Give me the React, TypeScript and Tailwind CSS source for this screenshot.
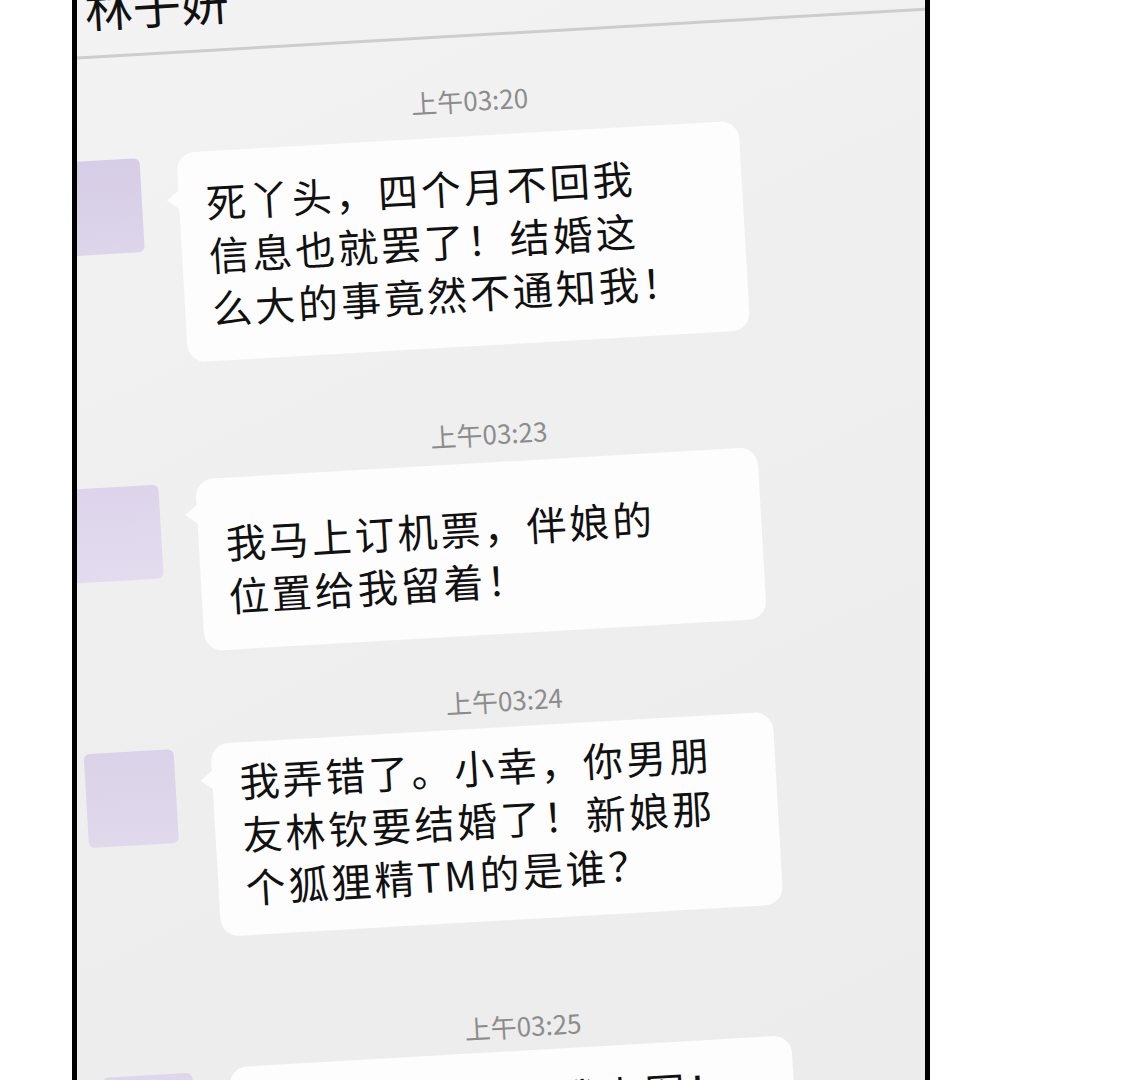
import React from "react";

type MsgProps = {
  lines: string[];
  rowClass: string;
  padClass: string;
  tailClass: string;
  avatarClass: string;
};

function Stamp({ text, cls }: { text: string; cls: string }) {
  return (
    <div className={`pr-[12px] text-center text-[26px] leading-[30px] text-[#8c8c8c] ${cls}`}>{text}</div>
  );
}

function Msg({ lines, rowClass, padClass, tailClass, avatarClass }: MsgProps) {
  return (
    <div className={`flex items-start pl-[55px] ${rowClass}`}>
      <div className={`mt-[3px] h-[94px] w-[90px] shrink-0 rounded-[6px] ${avatarClass}`} />
      <div className={`relative ml-[37px] w-[563px] shrink-0 rounded-[18px] bg-[#fdfdfd] pl-[27px] ${padClass}`}>
        <div
          className={`absolute left-[-12px] h-0 w-0 border-y-[10px] border-r-[13px] border-y-transparent border-r-[#fdfdfd] ${tailClass}`}
        />
        {lines.map((l, i) => (
          <div key={i} className="whitespace-nowrap text-[40px] leading-[53px] tracking-[3px] text-[#111111]">
            {l}
          </div>
        ))}
      </div>
    </div>
  );
}

export default function App() {
  return (
    <div className="flex h-[1080px] w-[1125px] overflow-hidden bg-white font-['Noto_Sans_CJK_SC','Noto_Sans',sans-serif]">
      <div className="w-[72px] shrink-0 bg-white" />
      <div className="relative h-full w-[858px] shrink-0 overflow-hidden border-x-[5px] border-black bg-[linear-gradient(155deg,#f3f3f3_0%,#efefef_40%,#ececec_100%)]">
        <div className="-mx-[60px] flex h-[1160px] origin-[483px_540px] rotate-[-3.3deg] flex-col">
          <div className="flex h-[36px] shrink-0 items-end border-b-[3px] border-[#cdcdcd] pl-[99px]">
            <div className="mb-[25px] text-[48px] leading-[48px] text-[#111111]">林子妍</div>
          </div>
          <Stamp text="上午03:20" cls="mt-[48px]" />
          <Msg
            rowClass="mt-[21px]"
            padClass="pt-[24px] pb-[27px]"
            tailClass="top-[37px]"
            avatarClass="bg-[linear-gradient(180deg,#d6cde6,#ddd5ea)]"
            lines={["死丫头，四个月不回我", "信息也就罢了！结婚这", "么大的事竟然不通知我！"]}
          />
          <Stamp text="上午03:23" cls="mt-[73px]" />
          <Msg
            rowClass="mt-[14px]"
            padClass="pt-[38px] pb-[28px]"
            tailClass="top-[25px]"
            avatarClass="bg-[linear-gradient(180deg,#ddd4eb,#e3dcef)]"
            lines={["我马上订机票，伴娘的", "位置给我留着！"]}
          />
          <Stamp text="上午03:24" cls="mt-[51px]" />
          <Msg
            rowClass="mt-[12px]"
            padClass="pt-[12px] pb-[22px]"
            tailClass="top-[26px]"
            avatarClass="bg-[linear-gradient(180deg,#dad2e8,#e0d9ec)]"
            lines={["我弄错了。小幸，你男朋", "友林钦要结婚了！新娘那", "个狐狸精TM的是谁？"]}
          />
          <Stamp text="上午03:25" cls="mt-[91px]" />
          <Msg
            rowClass="mt-[10px]"
            padClass="pt-[22px] pb-[28px]"
            tailClass="top-[30px]"
            avatarClass="bg-[linear-gradient(180deg,#e0d6ec,#e6def0)]"
            lines={["快把新郎照片给我上图！", "我倒要看看是谁"]}
          />
        </div>
      </div>
      <div className="flex-1 bg-white" />
    </div>
  );
}
